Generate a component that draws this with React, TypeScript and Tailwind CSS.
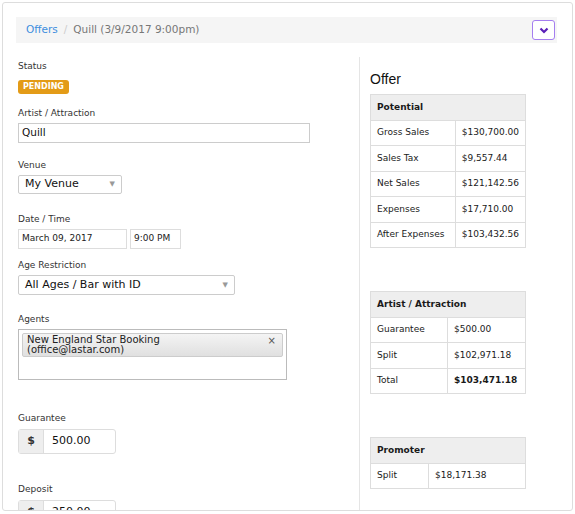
import React from 'react'

const font = { fontFamily: '"DejaVu Sans", "Liberation Sans", sans-serif' }

function Label({ children, className = '' }: { children: React.ReactNode; className?: string }) {
  return <div className={`text-[9px] leading-[12px] text-[#333] ${className}`}>{children}</div>
}

function Caret() {
  return <span className="text-[7px] leading-none text-[#999]">▼</span>
}

function MoneyInput({ value }: { value: string }) {
  return (
    <div className="mt-[5px] flex h-[25px] w-[98px] rounded-[3px] border border-[#ddd]">
      <div className="flex w-[25px] items-center justify-center border-r border-[#ddd] bg-[#eee] text-[11px] font-bold text-[#333]">$</div>
      <div className="flex items-center pl-[8px] text-[11px] text-[#111]">{value}</div>
    </div>
  )
}

type Row = { label: string; value: string; bold?: boolean }

function OfferTable({ title, rows, firstCol }: { title: string; rows: Row[]; firstCol: string }) {
  return (
    <table className="w-[156px] border-collapse whitespace-nowrap text-[9px] text-[#1a1a1a]">
      <thead>
        <tr>
          <th colSpan={2} className="h-[25.5px] border border-[#ddd] bg-[#eee] px-[6px] text-left font-bold">{title}</th>
        </tr>
      </thead>
      <tbody>
        {rows.map((r) => (
          <tr key={r.label}>
            <td className={`h-[25.5px] border border-[#ddd] px-[6px] ${firstCol}`}>{r.label}</td>
            <td className={`h-[25.5px] border border-[#ddd] px-[6px] ${r.bold ? 'font-bold' : ''}`}>{r.value}</td>
          </tr>
        ))}
      </tbody>
    </table>
  )
}

export default function App() {
  return (
    <div className="h-[514px] w-[575px] overflow-hidden bg-white p-[2px]" style={font}>
      <div className="h-[509px] overflow-hidden rounded-[3px] border border-[#ddd] px-[13px] pt-[14px]">
        {/* breadcrumb */}
        <div className="flex h-[26px] w-[541px] items-center justify-between bg-[#f5f5f5] pl-[10px] pr-[2px]">
          <div className="flex items-center gap-[6px] text-[10.5px]">
            <span className="text-[#3d8ede]">Offers</span>
            <span className="text-[#ccc]">/</span>
            <span className="text-[#777]">Quill (3/9/2017 9:00pm)</span>
          </div>
          <div className="flex h-[20px] w-[23px] items-center justify-center rounded-[3px] border border-[#a57ef0] bg-white">
            <svg width="10" height="7" viewBox="0 0 10 7">
              <path d="M1.5 1.5 L5 5 L8.5 1.5" fill="none" stroke="#5a1fb8" strokeWidth="2.2" />
            </svg>
          </div>
        </div>

        <div className="flex">
          {/* left column */}
          <div className="w-[343px] pl-[2px] pt-[17px]">
            <Label>Status</Label>
            <div className="mt-[4px] inline-flex h-[14px] items-center rounded-[3px] bg-[#e39b17] px-[5px] text-[8px] font-bold text-white">PENDING</div>

            <Label className="mt-[11px]">Artist / Attraction</Label>
            <div className="mt-[4px] flex h-[20px] w-[292px] items-center border border-[#ccc] px-[3px] text-[10.5px] text-[#111]">Quill</div>

            <Label className="mt-[16px]">Venue</Label>
            <div className="mt-[4px] flex h-[19px] w-[104px] items-center justify-between rounded-[2px] border border-[#ccc] px-[6px] text-[11px] text-[#111]">
              <span>My Venue</span>
              <Caret />
            </div>

            <Label className="mt-[19px]">Date / Time</Label>
            <div className="mt-[4px] flex gap-[3px]">
              <div className="flex h-[20px] w-[109px] items-center border border-[#ddd] px-[3px] text-[9px] text-[#222]">March 09, 2017</div>
              <div className="flex h-[20px] w-[51px] items-center border border-[#ddd] px-[3px] text-[9px] text-[#222]">9:00 PM</div>
            </div>

            <Label className="mt-[10px]">Age Restriction</Label>
            <div className="mt-[4px] flex h-[20px] w-[217px] items-center justify-between rounded-[2px] border border-[#ccc] px-[6px] text-[11px] text-[#111]">
              <span>All Ages / Bar with ID</span>
              <Caret />
            </div>

            <Label className="mt-[18px]">Agents</Label>
            <div className="mt-[4px] h-[51px] w-[269px] border border-[#bbb] p-[3px]">
              <div className="flex h-[24px] justify-between rounded-[2px] border border-[#ccc] bg-gradient-to-b from-[#f4f4f4] to-[#e0e0e0] pl-[4px] pr-[6px] pt-[1px]">
                <div className="text-[10px] text-[#222]">
                  <div className="h-[10px] leading-[10px]">New England Star Booking</div>
                  <div className="h-[10px] leading-[10px]">(office@lastar.com)</div>
                </div>
                <span className="text-[10px] leading-[12px] text-[#555]">×</span>
              </div>
            </div>

            <Label className="mt-[32px]">Guarantee</Label>
            <MoneyInput value="500.00" />

            <Label className="mt-[29px]">Deposit</Label>
            <MoneyInput value="250.00" />
          </div>

          {/* right column */}
          <div className="mt-[14px] flex h-[460px] flex-col border-l border-[#e5e5e5] pl-[10px]">
            <div className="mt-[14px] text-[14px] leading-[16px] text-[#111]" style={{ fontFamily: '"Liberation Sans", Arial, sans-serif' }}>Offer</div>
            <div className="mt-[7px]">
              <OfferTable
                title="Potential"
                firstCol="w-[85px]"
                rows={[
                  { label: 'Gross Sales', value: '$130,700.00' },
                  { label: 'Sales Tax', value: '$9,557.44' },
                  { label: 'Net Sales', value: '$121,142.56' },
                  { label: 'Expenses', value: '$17,710.00' },
                  { label: 'After Expenses', value: '$103,432.56' },
                ]}
              />
            </div>
            <div className="mt-[43px]">
              <OfferTable
                title="Artist / Attraction"
                firstCol="w-[77px]"
                rows={[
                  { label: 'Guarantee', value: '$500.00' },
                  { label: 'Split', value: '$102,971.18' },
                  { label: 'Total', value: '$103,471.18', bold: true },
                ]}
              />
            </div>
            <div className="mt-[43px]">
              <OfferTable title="Promoter" firstCol="w-[58px]" rows={[{ label: 'Split', value: '$18,171.38' }]} />
            </div>
          </div>
        </div>
      </div>
    </div>
  )
}
